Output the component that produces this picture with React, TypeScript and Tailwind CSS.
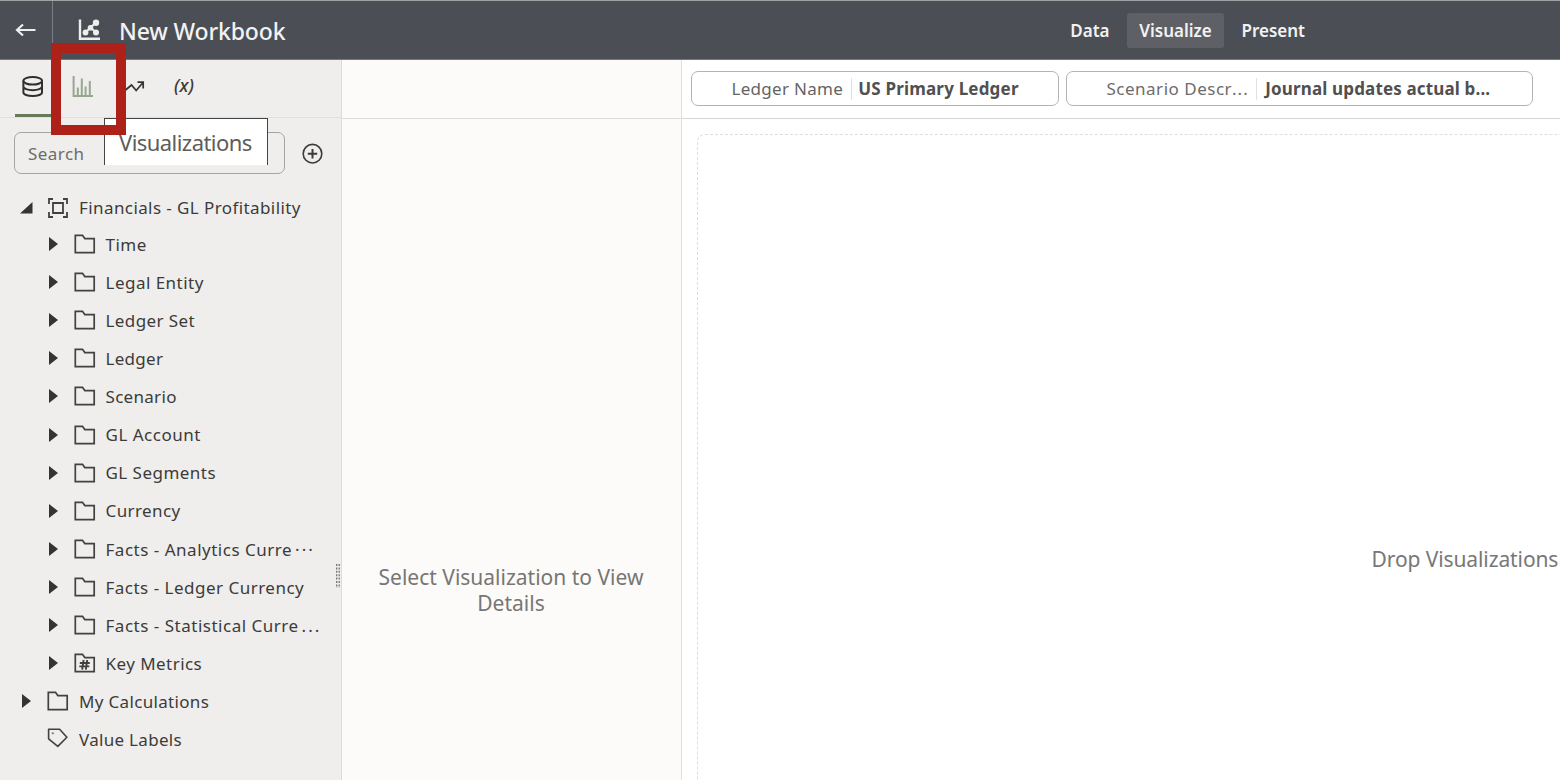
import type { ReactNode } from "react";

function Folder({ metric = false }: { metric?: boolean }) {
  return (
    <svg className="h-5 w-[22px] shrink-0" viewBox="0 0 22 20" fill="none" stroke="#42413f" strokeWidth="1.7">
      <path d="M1.3 18.6V1.3h7.2l2.3 3.3h9.4v14z" />
      {metric && <path d="M5.8 10h10M5.3 13.4h10M9.6 7 8.2 16.6M13.2 7l-1.4 9.6" strokeWidth="1.9" />}
    </svg>
  );
}

function Arrow() {
  return (
    <svg className="h-[14px] w-[9px] shrink-0" viewBox="0 0 9 14" fill="#343434">
      <path d="M0 0 9 7 0 14z" />
    </svg>
  );
}

function Tag() {
  return (
    <svg className="h-5 w-[22px] shrink-0" viewBox="0 0 22 20" fill="none" stroke="#42413f" strokeWidth="1.6" strokeLinejoin="round">
      <path d="M1.6 1.2h11l7.3 8-9.1 9.2-9.2-7.6z" />
      <circle cx="5.8" cy="5.3" r=".7" strokeWidth=".7" />
    </svg>
  );
}

const folders: { name: string; dots?: string; tracking: string }[] = [
  { name: "Time", tracking: "tracking-[0.5px]" },
  { name: "Legal Entity", tracking: "tracking-[0.48px]" },
  { name: "Ledger Set", tracking: "tracking-[0.4px]" },
  { name: "Ledger", tracking: "tracking-[0.3px]" },
  { name: "Scenario", tracking: "tracking-[0.3px]" },
  { name: "GL Account", tracking: "tracking-[0.5px]" },
  { name: "GL Segments", tracking: "tracking-[0.47px]" },
  { name: "Currency", tracking: "tracking-[0.4px]" },
  { name: "Facts - Analytics Curre", dots: "···", tracking: "tracking-[0.51px]" },
  { name: "Facts - Ledger Currency", tracking: "tracking-[0.49px]" },
  { name: "Facts - Statistical Curre", dots: "...", tracking: "tracking-[0.51px]" },
  { name: "Key Metrics", tracking: "tracking-[0.45px]" },
];

function Filter({ className, children }: { className: string; children: ReactNode }) {
  return (
    <div className={`flex h-[35px] items-center whitespace-nowrap rounded-[7px] border-[1.5px] border-[#b3b3b3] text-[17px] ${className}`}>
      {children}
    </div>
  );
}

function Header() {
  return (
    <header className="flex h-[60px] shrink-0 border-b border-t border-b-[#77787b] border-t-[#a0a1a3] bg-[#4b4e55] text-[#f2f2f2]">
      <div className="flex w-[53px] items-center border-r border-[#7c7e83] pl-[15px]">
        <svg className="h-4 w-[22px]" viewBox="0 0 22 16" fill="none" stroke="#eee" strokeWidth="2.2">
          <path d="M20.5 8H2M8 2.5 2 8l6 5.5" />
        </svg>
      </div>
      <div className="flex w-[1074px] items-center">
        <svg className="ml-[25px] h-[23px] w-[23px]" viewBox="0 0 23 23" fill="none" stroke="#eee" strokeWidth="2.4">
          <path d="m7.5 13.5 5-5 5.5-5M12.5 8.5l5.5 5" strokeWidth="2" />
          <path d="M2 .5v19.2h20" />
          <g fill="#eee" stroke="none">
            <circle cx="7.5" cy="13.5" r="2.9" />
            <circle cx="12.5" cy="8.7" r="2.8" />
            <circle cx="18" cy="3.8" r="3.2" />
            <circle cx="18" cy="13.5" r="3" />
          </g>
        </svg>
        <h1 className="ml-[18px] whitespace-nowrap pt-0.5 text-[23px] font-medium tracking-[-0.15px]">New Workbook</h1>
        <span className="ml-auto mr-[17.5px] pt-px text-[17px] font-semibold">Data</span>
      </div>
      <nav className="flex items-center text-[17px] font-semibold">
        <span className="flex h-[35px] w-[97px] items-center justify-center rounded-[3px] bg-[#5e6065] pt-px">Visualize</span>
        <span className="ml-[17.5px] pt-px">Present</span>
      </nav>
    </header>
  );
}

function Sidebar() {
  return (
    <aside className="relative flex w-[342px] shrink-0 flex-col border-r-[1.5px] border-[#dddcda] bg-[#efeeec] text-[#3c3b39]">
      <div className="flex h-[58px] shrink-0 border-b border-[#e0dfdd] pl-[15px]">
        <div className="flex w-[37px] border-b-[3.5px] border-[#657b55] pl-[7px] pt-4">
          <svg className="h-[21px] w-[22px]" viewBox="0 0 22 21" fill="none" stroke="#302f2e" strokeWidth="2">
            <ellipse cx="10.7" cy="4.8" rx="9.3" ry="3.8" />
            <path d="M1.4 4.8v11.6c0 2 4.1 3.6 9.3 3.6s9.3-1.6 9.3-3.6V4.8M1.4 10.6c0 2 4.1 3.6 9.3 3.6s9.3-1.6 9.3-3.6" />
          </svg>
        </div>
        <svg className="ml-5 mt-4 h-[22px] w-[22px]" viewBox="0 0 22 22" fill="none" stroke="#97a78f" strokeWidth="2">
          <path d="M1.6 0v20H21M5.8 11.5V20M9.8 2.5V20M13.6 10.5V20M17.8 5v15" />
        </svg>
        <svg className="ml-[29px] mt-[19px] h-4 w-[22px]" viewBox="0 0 22 16" fill="none" stroke="#353433" strokeWidth="1.7">
          <path d="M2 11.5 8.5 6l4.7 5.5L20 3.5M14.5 3.2h5.7V9.5" />
        </svg>
        <span className="ml-[29px] mt-[12px] text-[18px] font-medium italic leading-[26px]">(x)</span>
      </div>
      <div className="flex shrink-0 items-center pl-[14px] pt-[14px]">
        <div className="flex h-[42px] w-[271px] items-center rounded-[7px] border-[1.5px] border-[#a6a5a3] pl-[13px] text-[17px] text-[#6d6c6a]">
          <span className="pt-px tracking-[0.45px]">Search</span>
        </div>
        <svg className="ml-[17px] mt-px h-[22px] w-[22px]" viewBox="0 0 22 22" fill="none" stroke="#3b3a39" strokeWidth="1.6">
          <circle cx="10.5" cy="10.7" r="9.3" />
          <path d="M10.5 6v9.4M5.8 10.7h9.4" strokeWidth="2" />
        </svg>
      </div>
      <div className="mt-[15px] flex flex-col whitespace-nowrap text-[17px]">
        <div className="flex h-[36px] items-center pl-5">
          <svg className="mt-px h-3 w-[13px]" viewBox="0 0 13 12" fill="#343434">
            <path d="M12.5 0v11.5H0z" />
          </svg>
          <svg className="ml-[15px] mt-px h-5 w-5" viewBox="0 0 20 20" fill="none" stroke="#42413f" strokeWidth="1.8">
            <path d="M1 6V1h4M15 1h4v5M19 14v5h-4M5 19H1v-5M5 5h10v10H5z" />
          </svg>
          <span className="ml-[11px] pt-0.5 tracking-[0.41px]">Financials - GL Profitability</span>
        </div>
        {folders.map(({ name, dots, tracking }, i) => (
          <div key={name} className="flex h-[38.1px] items-center pl-[49px]">
            <Arrow />
            <span className="ml-4 flex"><Folder metric={i === 11} /></span>
            <span className={`ml-[9.5px] pt-px ${tracking}`}>
              {name}
              {dots && <span className="ml-[3px] tracking-[2px]">{dots}</span>}
            </span>
          </div>
        ))}
        <div className="flex h-[38.1px] items-center pl-[22px]">
          <Arrow />
          <span className="ml-4 flex"><Folder /></span>
          <span className="ml-[10px] pt-px tracking-[0.33px]">My Calculations</span>
        </div>
        <div className="flex h-[38.1px] items-center pl-[47px]">
          <span className="-mt-0.5 flex"><Tag /></span>
          <span className="ml-[10px] pt-px tracking-[0.3px]">Value Labels</span>
        </div>
      </div>
      <svg className="absolute right-px top-[504px] h-6 w-1" viewBox="0 0 4 24" stroke="#73726f" strokeWidth="1.3" strokeDasharray="2 1.4">
        <path d="M.7 0v24M3.2 0v24" />
      </svg>
      <div className="absolute left-[104px] top-[58px] h-[47px] w-[164px] whitespace-nowrap border-x-[1.5px] border-t-[1.5px] border-[#444] bg-white pl-[14px] text-[22px] leading-[46px] tracking-[-0.55px] text-[#5d5c5a]">
        Visualizations
      </div>
      <div className="absolute left-[51px] top-[-17px] h-[92px] w-[75px] border-[10px] border-[#ae2118]" />
    </aside>
  );
}

export default function App() {
  return (
    <div className="flex h-[780px] w-[1560px] flex-col overflow-hidden bg-white font-['Noto_Sans','Open_Sans',sans-serif]">
      <Header />
      <div className="flex min-h-0 flex-1">
        <Sidebar />
        <section className="flex w-[340px] shrink-0 flex-col border-r-[1.5px] border-[#e0dfdd] bg-[#fcfbf9]">
          <div className="h-[59px] shrink-0 border-b border-[#dedddb]" />
          <p className="mr-px mt-[445px] text-center text-[21px] leading-[26px] text-[#777674]">
            Select Visualization to View<br />Details
          </p>
        </section>
        <main className="flex min-w-0 flex-1 flex-col">
          <div className="flex h-[59px] shrink-0 gap-[7px] border-b border-[#d5d5d5] pl-[9px] pt-[11px]">
            <Filter className="w-[368px] pl-[39.5px]">
              <span className="tracking-[0.3px] text-[#646464]">Ledger Name</span>
              <span className="ml-2 h-[22px] w-px bg-[#e1e1e1]" />
              <span className="ml-[6px] font-bold tracking-[0.19px] text-[#505050]">US Primary Ledger</span>
            </Filter>
            <Filter className="w-[467px] pl-[39.5px]">
              <span className="tracking-[0.5px] text-[#6c6c6c]">
                Scenario Descr<span className="tracking-[1px]">...</span>
              </span>
              <span className="ml-[7px] h-[22px] w-px bg-[#e1e1e1]" />
              <span className="ml-[8.5px] font-bold tracking-[0.15px] text-[#505050]">Journal updates actual b...</span>
            </Filter>
          </div>
          <div className="-mr-3 ml-[15px] mt-[15px] flex-1 rounded-tl-[8px] border-l-[1.5px] border-t-[1.5px] border-dashed border-[#dedede]">
            <p className="ml-[673.5px] mt-[410px] whitespace-nowrap text-[21px] leading-[28px] tracking-[-0.1px] text-[#777]">Drop Visualizations</p>
          </div>
        </main>
      </div>
    </div>
  );
}
